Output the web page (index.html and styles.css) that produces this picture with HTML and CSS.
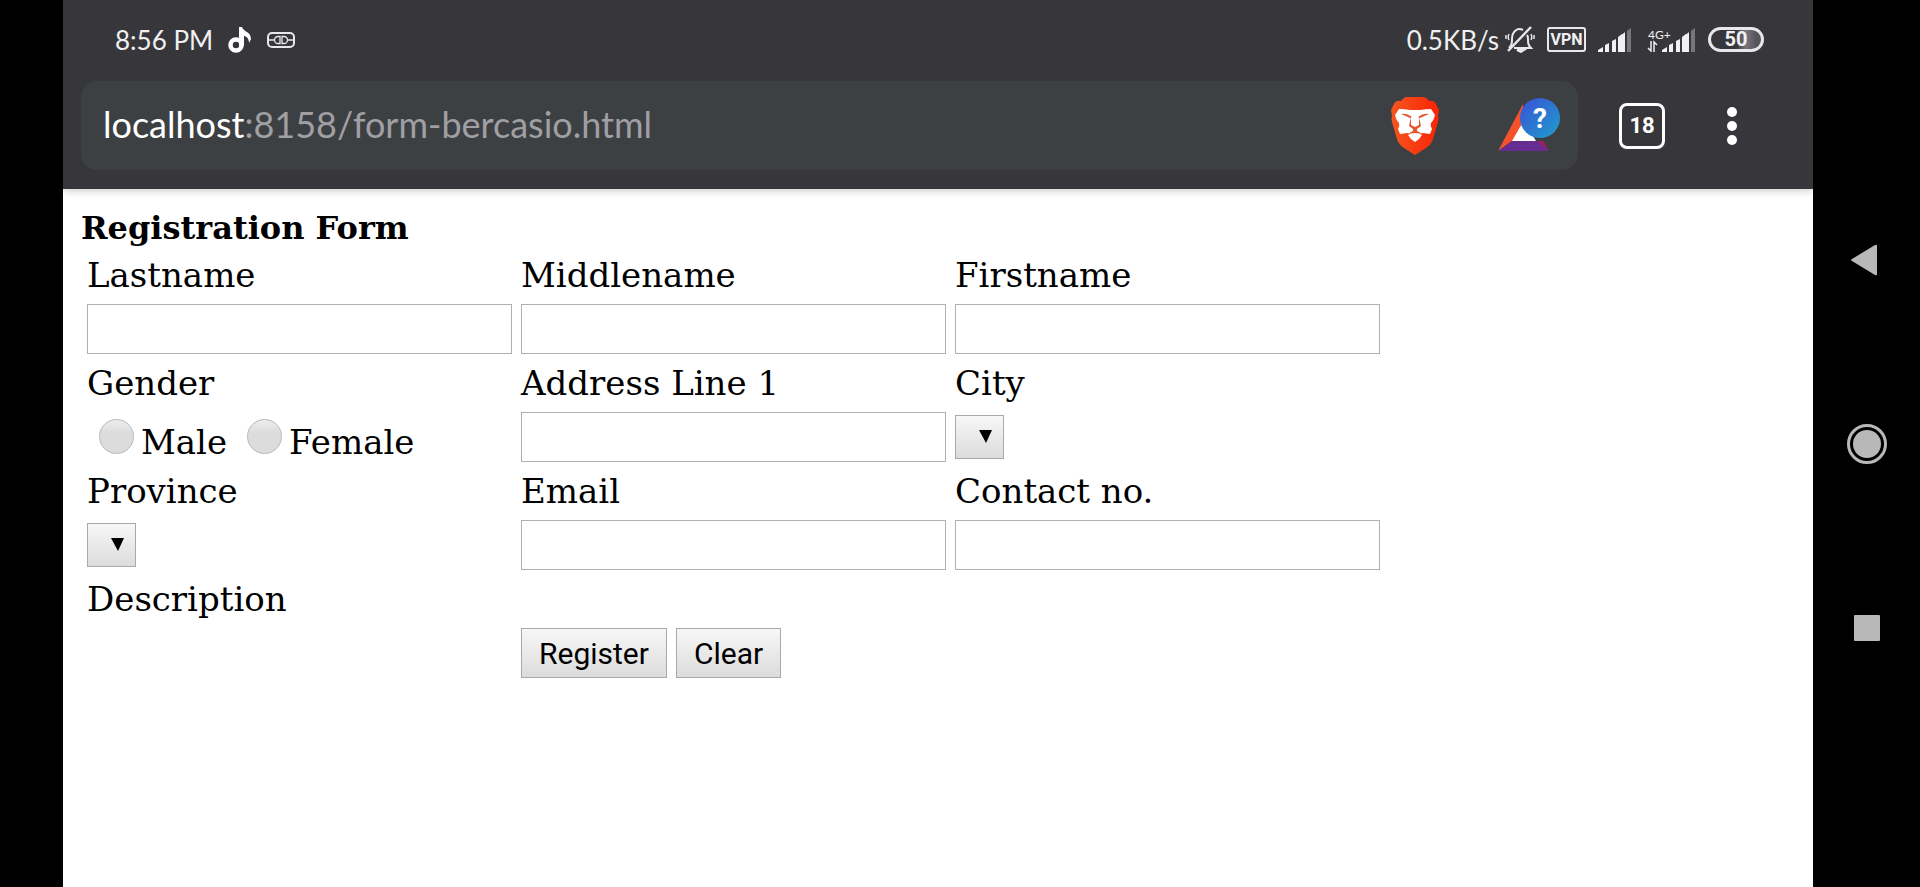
FILE: index.html
```
<!DOCTYPE html>
<html lang="en">
<head>
  <meta charset="UTF-8">
  <meta name="viewport" content="width=device-width, initial-scale=1.0">
  <title>Registration Form</title>
  <link rel="stylesheet" href="styles.css">
</head>
<body>
  <div class="screen">
    <header class="browser-header">
      <!-- Status bar -->
      <div class="status-bar">
        <div class="status-left">
          <span class="clock">8:56 PM</span>
          <svg width="24" height="26" viewBox="0 0 24 26">
            <circle cx="8" cy="18" r="5.500" fill="none" stroke="#fff" stroke-width="4.500"/>
            <path d="M11 0h3c1 5 9 4 9 12l-2 4c0-5-3-7-5-7v10h-5z" fill="#fff"/>
          </svg>
          <svg width="28" height="16" viewBox="0 0 28 16" fill="none" stroke="#e8e8ea" stroke-width="2">
            <rect x="1" y="1" width="26" height="14" rx="4"/>
            <path d="M2 8h5M21 8h5" stroke-width="1.500"/>
            <path d="M13 4.500h-2a3.500 3.500 0 0 0 0 7h2zM15 4.500h2a3.500 3.500 0 0 1 0 7h-2z" stroke-width="1.300"/>
          </svg>
        </div>
        <div class="status-right">
          <span class="net-speed">0.5KB/s</span>
          <svg width="30" height="27" viewBox="0 0 30 27" fill="none" stroke="#e8e8ea" stroke-width="2">
            <path d="M9 22h17c-3-3-3-5-3-9 0-1 0-3-1-4M18 4c-6-3-11 2-11 9 0 4 0 6-3 9"/>
            <path d="M4 8c-1 2-1 4 0 6M1 9v4M26 8c1 2 1 4 0 6M29 9v4" stroke-width="1.500"/>
            <path d="M12 24h7l-3 2z" fill="#e8e8ea"/>
            <path d="M26 1L3 25" stroke-width="2.500"/>
          </svg>
          <span class="vpn">VPN</span>
          <svg width="34" height="24" viewBox="0 0 34 24" fill="#f0f0f2">
            <path d="M0 24v-2l5-3v5zM7 17l4-2v9H7zM14 13l4-2v13h-4zM20 9l4-3v18h-4zM26 5l1-1v20h-4V7z"/>
            <path d="M29 3l4-3v24h-4z" fill="#77767b"/>
          </svg>
          <svg width="52" height="24" viewBox="0 0 52 24" fill="#f0f0f2">
            <text class="net-type" x="4" y="11">4G+</text>
            <path d="M7 13v10l-3-3M10 24V14l3 3" fill="none" stroke="#f0f0f2" stroke-width="1.500"/>
            <path d="M18 24v-2l5-3v5zM25 17l4-2v9h-4zM32 13l4-2v13h-4zM38 9l4-3v18h-4z"/>
            <path d="M44 5l1-1v20h-4V7z"/>
            <path d="M47 3l4-3v24h-4z" fill="#77767b"/>
          </svg>
          <span class="battery">50</span>
        </div>
      </div>

      <!-- Address bar -->
      <div class="toolbar">
        <div class="address-bar">
          <div class="url"><span class="host">localhost</span>:8158/form-bercasio.html</div>
          <button type="button" class="icon-btn" aria-label="Shields">
            <svg width="48" height="58" viewBox="0 0 48 58">
              <defs>
                <linearGradient id="lion" x1="0" x2="1"><stop offset="0" stop-color="#f4561e"/><stop offset="1" stop-color="#fb2306"/></linearGradient>
              </defs>
              <path d="M15 0h18q3 1 5 4 5-1 7 3l3 6-1 6q1 3 0 6l-5 17q-2 6-7 9l-11 7-11-7q-5-3-7-9L1 25q-1-3 0-6l-1-6 3-6q2-4 7-3 2-3 5-4z" fill="url(#lion)"/>
              <path d="M8 12q6 0 11 1h10q5-1 11-1l4 6q-1 5-4 8-1 3 1 6l-2 5-7-1q-4 1-6 3l-2 1-2-1q-2-2-6-3l-7 1-2-5q2-3 1-6-3-3-4-8z" fill="#fff"/>
              <path d="M17 38l7-3 7 3q-2 4-7 7-5-3-7-7z" fill="#fff"/>
              <path d="M10 17q6-1 11 3l-2 1q-4-2-9-4zM38 17q-6-1-11 3l2 1q4-2 9-4zM20 20v8l4 2 4-2v-8l2 9-4 3v2l6 3-8-1-8 1 6-3v-2l-4-3z" fill="#e8532f"/>
            </svg>
          </button>
          <button type="button" class="icon-btn" aria-label="Rewards">
            <svg width="65" height="58" viewBox="0 0 65 58">
              <defs>
                <linearGradient id="badge" x1="0" y1="0" x2="1" y2="1"><stop offset="0" stop-color="#3b4fd8"/><stop offset="1" stop-color="#1e9fcb"/></linearGradient>
              </defs>
              <path d="M25 20l14 24H14z" fill="#fff"/>
              <path d="M26 7v18L15 44 1 54z" fill="#f4512c"/>
              <path d="M1 54l14-10h31l6 10z" fill="#662d91"/>
              <path d="M40 44h6l6 10z" fill="#9e1f63"/>
              <circle cx="43" cy="21" r="20" fill="url(#badge)"/>
              <text class="badge-text" x="43" y="31">?</text>
            </svg>
          </button>
        </div>
        <button type="button" class="tabs-btn" aria-label="Tabs">18</button>
        <button type="button" class="icon-btn" aria-label="Menu">
          <svg width="52" height="38" viewBox="0 0 52 38" fill="#fff">
            <circle cx="26" cy="5" r="5"/>
            <circle cx="26" cy="19" r="5"/>
            <circle cx="26" cy="33" r="5"/>
          </svg>
        </button>
      </div>
    </header>

    <!-- Page -->
    <main class="page">
      <h1>Registration Form</h1>
      <form id="registrationForm" class="form-grid">
        <label for="lastname">Lastname</label>
        <label for="middlename">Middlename</label>
        <label for="firstname">Firstname</label>
        <input type="text" id="lastname">
        <input type="text" id="middlename">
        <input type="text" id="firstname">

        <span id="genderLabel">Gender</span>
        <label for="address">Address Line 1</label>
        <label for="city">City</label>
        <div class="gender" role="radiogroup" aria-labelledby="genderLabel">
          <label><input type="radio" name="gender" value="male">Male</label>
          <label><input type="radio" name="gender" value="female">Female</label>
        </div>
        <input type="text" id="address">
        <select id="city"></select>

        <label for="province">Province</label>
        <label for="email">Email</label>
        <label for="contact">Contact no.</label>
        <select id="province"></select>
        <input type="text" id="email">
        <input type="text" id="contact">

        <span class="full-row">Description</span>
        <div class="buttons">
          <button type="submit">Register</button>
          <button type="reset">Clear</button>
        </div>
      </form>
    </main>
  </div>

  <!-- Phone navigation -->
  <nav class="phone-nav">
    <button type="button" class="icon-btn" aria-label="Back">
      <svg width="40" height="40" viewBox="0 0 40 40" fill="#b8b8b8"><path d="M5 19L28 5q2-1 2 1v28q0 2-2 1L5 21q-2-1 0-2z"/></svg>
    </button>
    <button type="button" class="icon-btn" aria-label="Home">
      <svg width="40" height="40" viewBox="0 0 40 40" fill="#b8b8b8">
        <circle cx="20" cy="20" r="18.500" fill="none" stroke="#b8b8b8" stroke-width="3"/>
        <circle cx="20" cy="20" r="14"/>
      </svg>
    </button>
    <button type="button" class="icon-btn" aria-label="Recent apps">
      <svg width="40" height="40" viewBox="0 0 40 40" fill="#b8b8b8"><rect x="7" y="7" width="26" height="26" rx="1"/></svg>
    </button>
  </nav>
</body>
</html>
```
FILE: styles.css
```
* {
  margin: 0;
  padding: 0;
  box-sizing: border-box;
}

body {
  display: flex;
  min-height: 100vh;
  padding-left: 63px;
  background-color: #000;
}

svg {
  display: block;
}

.screen {
  flex: 1;
  display: flex;
  flex-direction: column;
}

.icon-btn {
  background: none;
  border: none;
  cursor: pointer;
}

/* browser header */
.browser-header {
  position: relative;
  padding-bottom: 19px;
  background-color: #37363b;
  box-shadow: 0 2px 8px rgba(0, 0, 0, 0.2);
  clip-path: inset(0 0 -12px 0);
}

.status-bar {
  display: flex;
  justify-content: space-between;
  align-items: center;
  height: 81px;
  padding: 0 49px 2px 52px;
  color: #f0f0f2;
  font-family: Lato, sans-serif;
  font-size: 26px;
}

.status-left,
.status-right {
  display: flex;
  align-items: center;
}

.status-left {
  gap: 15px;
}

.status-right {
  gap: 12px;
}

.net-speed {
  margin-right: -6px;
}

.vpn {
  width: 39px;
  border: 2px solid #e8e8ea;
  border-radius: 3px;
  font: bold 16px/21px Roboto, sans-serif;
  text-align: center;
}

.net-type {
  font: 12px Lato, sans-serif;
}

.battery {
  width: 56px;
  border: 3px solid #e8e8ea;
  border-radius: 13px;
  background: linear-gradient(to right, #37363b 50%, #77767b 70%, #55545a 90%);
  font: bold 20px/19px Roboto, sans-serif;
  text-align: center;
}

.toolbar {
  display: flex;
  align-items: center;
  gap: 41px;
  padding: 0 55px 0 18px;
}

.address-bar {
  flex: 1;
  display: flex;
  align-items: center;
  gap: 58px;
  height: 89px;
  padding: 0 16px 0 22px;
  background-color: #3d4043;
  border-radius: 16px;
}

.url {
  flex: 1;
  padding-bottom: 4px;
  color: #a09fa3;
  font-family: Lato, sans-serif;
  font-size: 36px;
}

.host {
  color: #fff;
}

.badge-text {
  fill: #fff;
  font: bold 28px Roboto, sans-serif;
  text-anchor: middle;
}

.tabs-btn {
  width: 46px;
  height: 46px;
  background: none;
  border: 3px solid #fff;
  border-radius: 8px;
  color: #fff;
  font: bold 22px Roboto, sans-serif;
  cursor: pointer;
}

/* registration page */
.page {
  flex: 1;
  padding: 17px 18px;
  background-color: #fff;
  color: #000;
  font-family: "DejaVu Serif", serif;
  font-size: 34px;
}

h1 {
  font-size: 32px;
  line-height: 44px;
}

.form-grid {
  display: grid;
  grid-template-columns: repeat(3, 1fr);
  grid-auto-rows: 50px;
  gap: 4px 9px;
  align-items: center;
  max-width: 1293px;
  margin: 0 6px;
}

input[type="text"] {
  width: 100%;
  height: 50px;
  padding: 0 6px;
  border: 1px solid #b0b0b0;
  font: 28px Roboto, sans-serif;
}

.gender {
  display: flex;
  align-self: end;
  gap: 20px;
  padding-left: 12px;
}

.gender label {
  display: flex;
  align-items: baseline;
  gap: 7px;
}

input[type="radio"] {
  appearance: none;
  width: 35px;
  height: 35px;
  border: 1px solid #b8b8b8;
  border-radius: 50%;
  background: linear-gradient(#ededed, #dcdcdc 40%);
}

select {
  appearance: none;
  width: 49px;
  height: 44px;
  border: 1px solid #a9a9a9;
  background: url("data:image/svg+xml,%3Csvg xmlns='http://www.w3.org/2000/svg' width='13' height='13'%3E%3Cpath d='M0 0h13L7 13z'/%3E%3C/svg%3E") 23px 14px no-repeat, linear-gradient(#f7f7f7, #dcdcdc);
}

.full-row {
  grid-column: 1 / -1;
}

.buttons {
  grid-column: 2;
  display: flex;
  gap: 9px;
}

.buttons button {
  height: 50px;
  padding: 0 17px;
  border: 1px solid #a9a9a9;
  background: linear-gradient(#f7f7f7, #dcdcdc);
  color: #000;
  font: 30px Roboto, sans-serif;
  cursor: pointer;
}

/* phone navigation */
.phone-nav {
  display: flex;
  flex-direction: column;
  justify-content: center;
  align-items: center;
  gap: 144px;
  width: 107px;
}
```
